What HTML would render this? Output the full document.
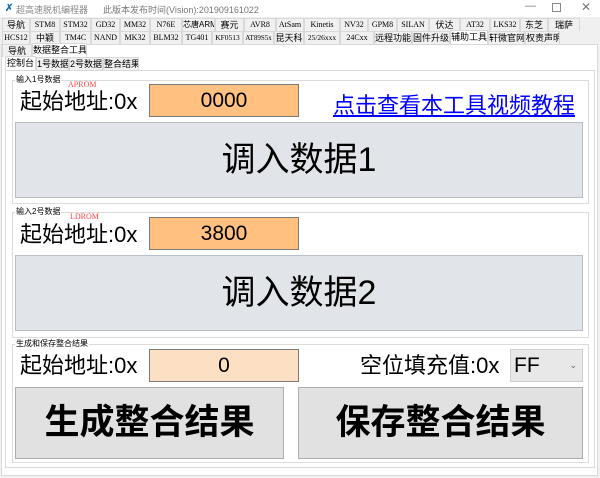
<!DOCTYPE html>
<html><head><meta charset="utf-8"><style>
*{margin:0;padding:0;box-sizing:border-box}
body{width:600px;height:478px;background:#f0f0f0;position:relative;overflow:hidden;font-family:"Liberation Sans","Noto Sans CJK SC",sans-serif;color:#000}
.a{position:absolute}
.title{left:0;top:0;width:600px;height:17px;background:#fff}
.t{position:absolute;height:13px;border:1px solid #d9d9d9;border-bottom:none;background:#f0f0f0;font-size:8px;line-height:12px;text-align:center;white-space:nowrap;overflow:hidden;font-family:"Liberation Serif","Noto Sans CJK SC",serif}
.t.c{font-family:"Liberation Sans","Noto Sans CJK SC",sans-serif;font-size:9px}
.sel{background:#fff}
.lbl{font-size:22px;line-height:26px}
.box{border:1px solid #7a7a7a;font-size:21px;text-align:center}
.btn{background:#e1e1e1;border:1px solid #adadad;text-align:center}
.grp{border:1px solid #dcdcdc}
.gt{font-size:8px;background:#fff;padding:0 1px;line-height:10px}
</style></head><body>
<div class="a title"></div>
<div class="a" style="left:5px;top:3px;font-size:10px;color:#1a6fb5;font-weight:bold">✗</div>
<div class="a" style="left:16px;top:3px;font-size:9px;color:#888">超高速脱机编程器</div>
<div class="a" style="left:103px;top:3px;font-size:9px;color:#777">此版本发布时间(Vision):201909161022</div>
<div class="a" style="left:525px;top:0px;font-size:11px;color:#777">—</div>
<div class="a" style="left:552px;top:3px;width:9px;height:9px;border:1px solid #888"></div>
<div class="a" style="left:581px;top:0px;font-size:12px;color:#777">✕</div>

<div class="t c" style="left:2px;top:18px;width:28px">导航</div>
<div class="t" style="left:30px;top:18px;width:30px">STM8</div>
<div class="t" style="left:60px;top:18px;width:31px">STM32</div>
<div class="t" style="left:91px;top:18px;width:29px">GD32</div>
<div class="t" style="left:120px;top:18px;width:30px">MM32</div>
<div class="t" style="left:150px;top:18px;width:32px">N76E</div>
<div class="t c" style="left:182px;top:18px;width:33px;font-size:8px">芯唐ARM</div>
<div class="t c" style="left:215px;top:18px;width:29px">赛元</div>
<div class="t" style="left:244px;top:18px;width:32px">AVR8</div>
<div class="t" style="left:276px;top:18px;width:28px">AtSam</div>
<div class="t" style="left:304px;top:18px;width:36px">Kinetis</div>
<div class="t" style="left:340px;top:18px;width:28px">NV32</div>
<div class="t" style="left:368px;top:18px;width:29px">GPM8</div>
<div class="t" style="left:397px;top:18px;width:32px">SILAN</div>
<div class="t c" style="left:429px;top:18px;width:31px">伏达</div>
<div class="t" style="left:460px;top:18px;width:30px">AT32</div>
<div class="t" style="left:490px;top:18px;width:30px">LKS32</div>
<div class="t c" style="left:520px;top:18px;width:28px">东芝</div>
<div class="t c" style="left:548px;top:18px;width:32px">瑞萨</div>

<div class="t" style="left:2px;top:31px;width:28px">HCS12</div>
<div class="t c" style="left:30px;top:31px;width:30px">中颖</div>
<div class="t" style="left:60px;top:31px;width:31px">TM4C</div>
<div class="t" style="left:91px;top:31px;width:29px">NAND</div>
<div class="t" style="left:120px;top:31px;width:30px">MK32</div>
<div class="t" style="left:150px;top:31px;width:32px">BLM32</div>
<div class="t" style="left:182px;top:31px;width:30px">TG401</div>
<div class="t" style="left:212px;top:31px;width:31px;font-size:7.5px">KF0513</div>
<div class="t" style="left:243px;top:31px;width:31px;font-size:7px">AT89S5x</div>
<div class="t c" style="left:274px;top:31px;width:30px">昆天科</div>
<div class="t" style="left:304px;top:31px;width:36px;font-size:7.5px">25/26xxx</div>
<div class="t" style="left:340px;top:31px;width:34px">24Cxx</div>
<div class="t c" style="left:374px;top:31px;width:38px">远程功能</div>
<div class="t c" style="left:412px;top:31px;width:38px">固件升级</div>
<div class="t c sel" style="left:450px;top:30px;width:38px;height:14px">辅助工具</div>
<div class="t c" style="left:488px;top:31px;width:37px">轩微官网</div>
<div class="t c" style="left:525px;top:31px;width:35px">权责声明</div>

<div class="a" style="left:1px;top:44px;width:597px;height:432px;background:#fff;border:1px solid #d9d9d9"></div>
<div class="t c" style="left:2px;top:44px;width:30px;height:13px">导航</div>
<div class="t c sel" style="left:32px;top:43px;width:55px;height:14px">数据整合工具</div>
<div class="a" style="left:3px;top:57px;width:593px;height:418px;background:#fff"></div>
<div class="t c sel" style="left:5px;top:56px;width:31px;height:14px">控制台</div>
<div class="t c" style="left:36px;top:57px;width:33px">1号数据</div>
<div class="t c" style="left:69px;top:57px;width:34px">2号数据</div>
<div class="t c" style="left:103px;top:57px;width:36px">整合结果</div>
<div class="a" style="left:5px;top:70px;width:590px;height:398px;border:1px solid #d9d9d9"></div>

<div class="a grp" style="left:12px;top:80px;width:577px;height:124px"></div>
<div class="a gt" style="left:15px;top:75px">输入1号数据</div>
<div class="a" style="left:68px;top:80px;font-size:8px;color:#f44;font-family:'Liberation Serif',serif">APROM</div>
<div class="a lbl" style="left:20px;top:89px">起始地址:0x</div>
<div class="a box" style="left:149px;top:84px;width:150px;height:33px;background:#ffc080;line-height:31px">0000</div>
<div class="a" style="left:333px;top:88px;font-size:22px;color:#00f;text-decoration:underline">点击查看本工具视频教程</div>
<div class="a btn" style="left:15px;top:122px;width:568px;height:76px;background:#e1e4e8;border-color:#b9bec4;font-size:34px;line-height:74px">调入数据1</div>

<div class="a grp" style="left:12px;top:212px;width:577px;height:126px"></div>
<div class="a gt" style="left:15px;top:207px">输入2号数据</div>
<div class="a" style="left:70px;top:212px;font-size:8px;color:#f44;font-family:'Liberation Serif',serif">LDROM</div>
<div class="a lbl" style="left:20px;top:222px">起始地址:0x</div>
<div class="a box" style="left:149px;top:217px;width:150px;height:33px;background:#ffc080;line-height:31px">3800</div>
<div class="a btn" style="left:15px;top:255px;width:568px;height:76px;background:#e1e4e8;border-color:#b9bec4;font-size:34px;line-height:74px">调入数据2</div>

<div class="a grp" style="left:12px;top:344px;width:577px;height:119px"></div>
<div class="a gt" style="left:15px;top:339px">生成和保存整合结果</div>
<div class="a lbl" style="left:20px;top:353px">起始地址:0x</div>
<div class="a box" style="left:149px;top:349px;width:150px;height:33px;background:#fde0c4;line-height:31px">0</div>
<div class="a lbl" style="left:360px;top:353px">空位填充值:0x</div>
<div class="a" style="left:510px;top:349px;width:73px;height:33px;background:#e8e8e8;border:1px solid #cfcfcf;font-size:21px;line-height:31px;padding-left:3px">FF<span style="position:absolute;right:5px;top:0;font-size:9px;color:#666">⌄</span></div>
<div class="a btn" style="left:15px;top:387px;width:269px;height:72px;font-size:35px;font-weight:bold;line-height:70px">生成整合结果</div>
<div class="a btn" style="left:298px;top:387px;width:285px;height:72px;font-size:35px;font-weight:bold;line-height:70px">保存整合结果</div>
</body></html>
